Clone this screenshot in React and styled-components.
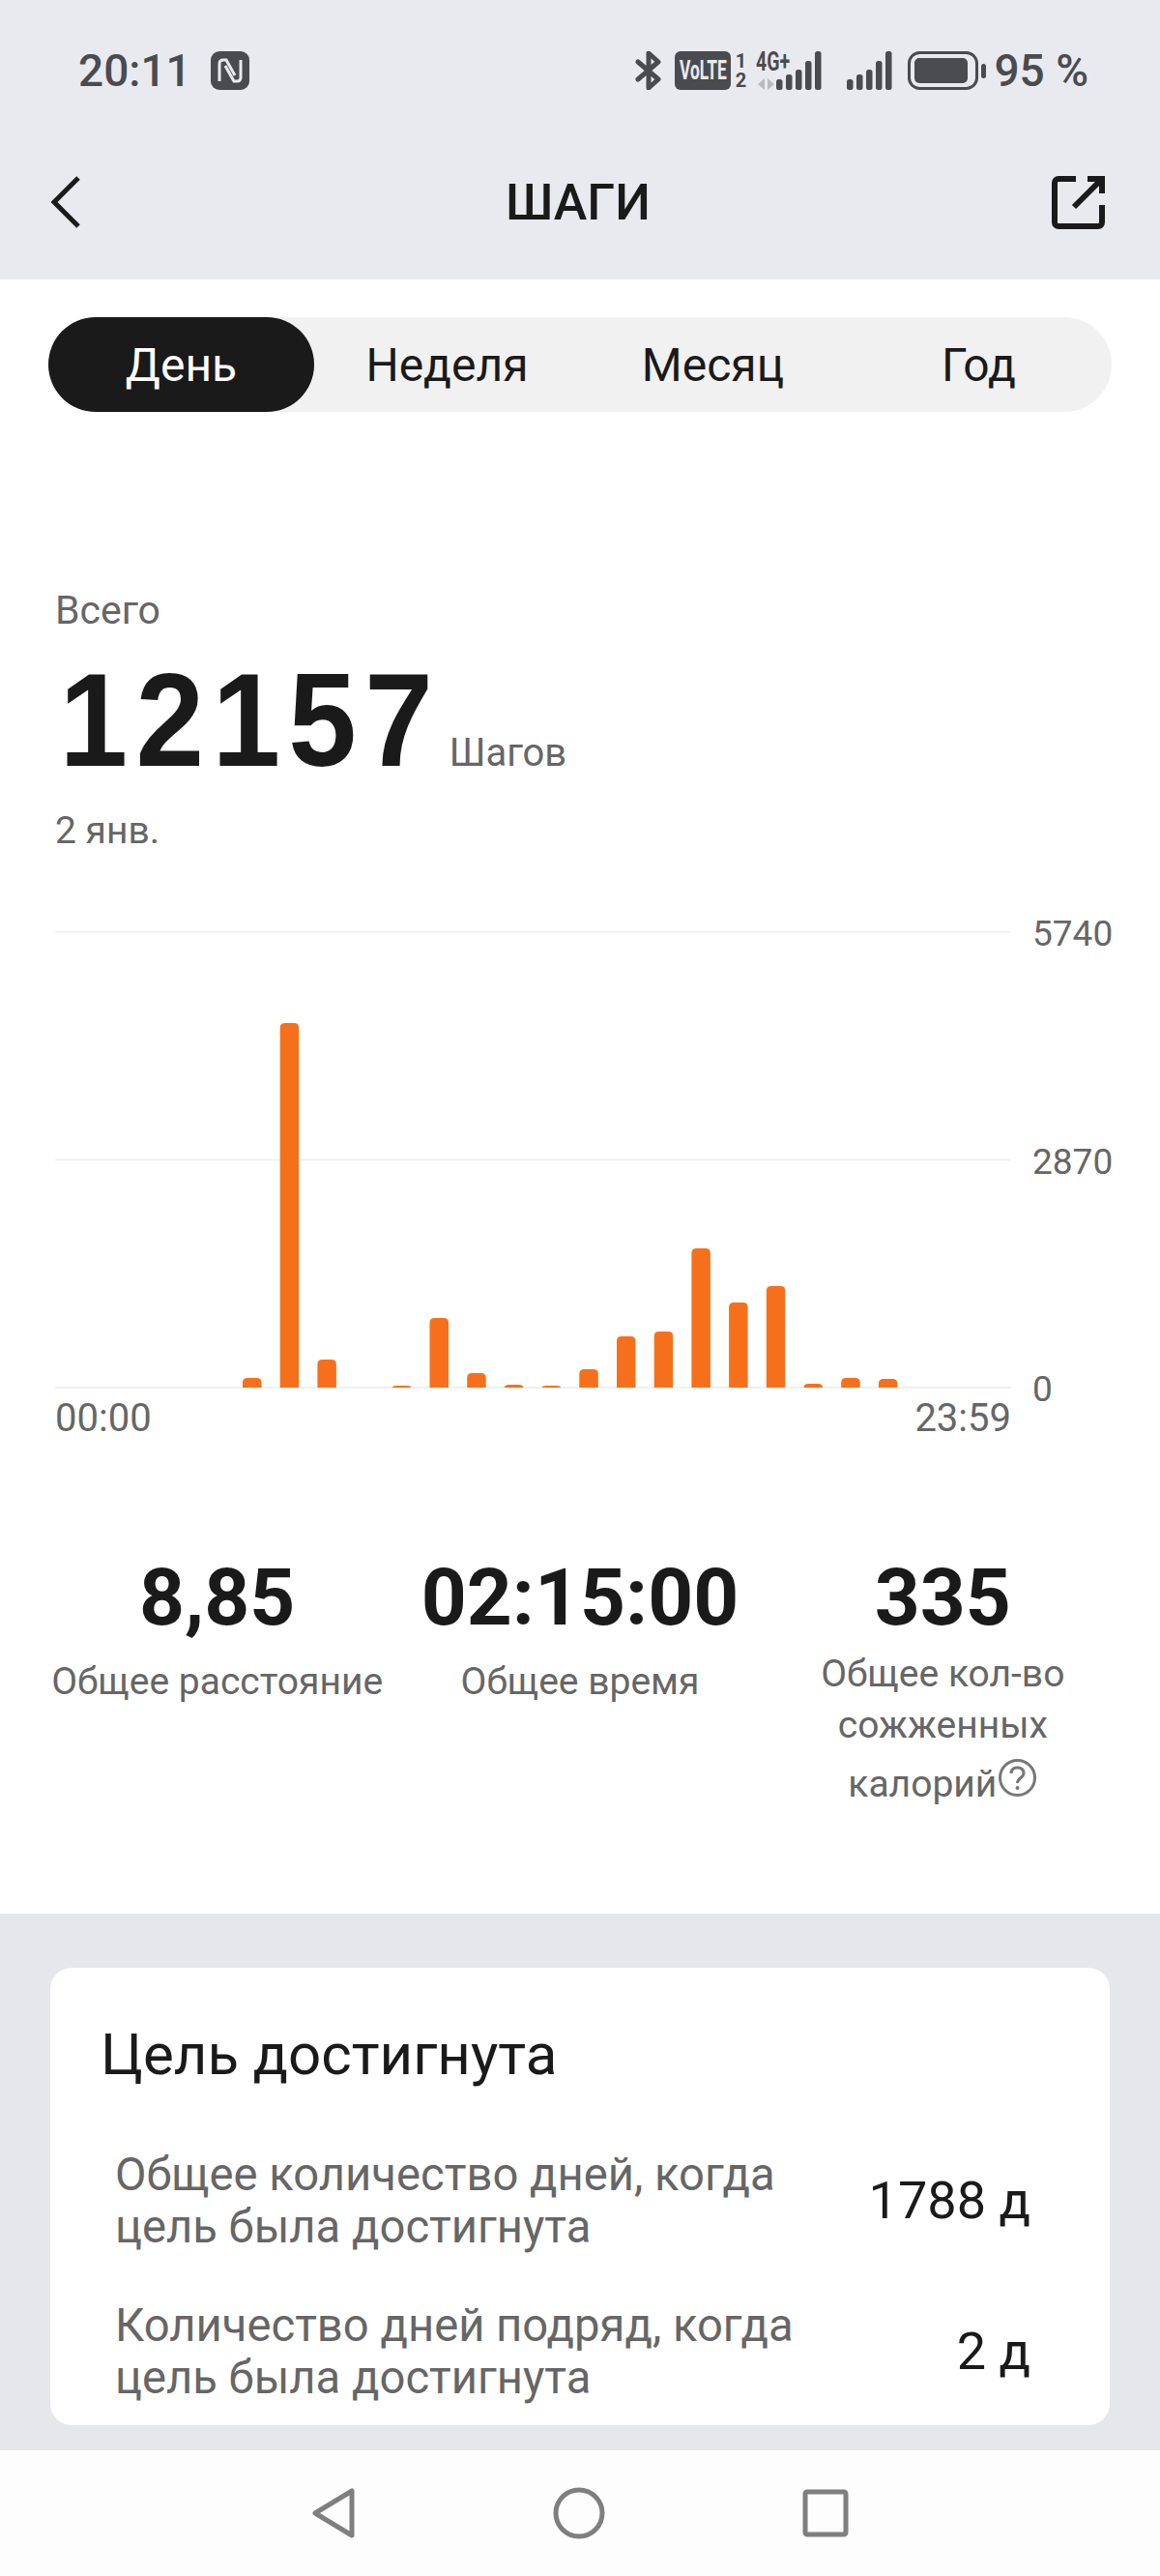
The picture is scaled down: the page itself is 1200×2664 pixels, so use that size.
import React from 'react';
import styled, { createGlobalStyle } from 'styled-components';

const GlobalStyle = createGlobalStyle`
  html, body {
    margin: 0;
    padding: 0;
    background: #fff;
  }
  * {
    box-sizing: border-box;
  }
`;

const Page = styled.div`
  width: 1200px;
  height: 2664px;
  display: flex;
  flex-direction: column;
  overflow: hidden;
  background: #fff;
  font-family: Roboto, "Noto Sans", sans-serif;
`;

const TopArea = styled.header`
  height: 289px;
  background: #e9eaef;
`;

const StatusBar = styled.div`
  height: 146px;
  padding: 0 74px 0 81px;
  display: flex;
  align-items: center;
  justify-content: space-between;
  color: #4a4b4f;
`;

const StatusGroup = styled.div`
  display: flex;
  align-items: center;
`;

const StatusText = styled.span`
  font-size: 46px;
  font-weight: 500;
  line-height: 46px;
  margin-left: ${props => props.$gap || 0}px;
`;

const VolteBox = styled.span`
  width: 58px;
  height: 40px;
  margin-left: 14px;
  border-radius: 6px;
  background: #4a4b4f;
  color: #e9eaef;
  display: flex;
  align-items: center;
  justify-content: center;
  overflow: hidden;
`;

const Squeezed = styled.span`
  display: inline-block;
  transform: scaleX(${props => props.$x});
  transform-origin: ${props => props.$origin || 'center'};
  font-size: ${props => props.$size}px;
  font-weight: 700;
  line-height: 1;
`;

const SimDigits = styled.span`
  width: 10px;
  margin-left: 5px;
  display: flex;
  flex-direction: column;
  align-items: center;
  font-size: 20px;
  font-weight: 700;
  line-height: 20px;
`;

const SignalSlot = styled.span`
  position: relative;
  width: 68px;
  height: 40px;
  margin-left: 11px;
`;

const FourG = styled.span`
  position: absolute;
  left: 0;
  top: -2px;
  white-space: nowrap;
`;

const SecondSignal = styled.span`
  display: flex;
  margin-left: 26px;
`;

const NavRow = styled.div`
  height: 126px;
  padding: 0 57px 0 53px;
  display: grid;
  grid-template-columns: 1fr auto 1fr;
  align-items: center;
`;

const NavEnd = styled.div`
  display: flex;
  justify-content: ${props => (props.$right ? 'flex-end' : 'flex-start')};
`;

const Title = styled.h1`
  margin: 0;
  font-size: 52px;
  font-weight: 500;
  color: #1a1a1a;
`;

const Tabs = styled.div`
  margin: 39px 50px 0;
  height: 98px;
  display: grid;
  grid-template-columns: repeat(4, 1fr);
  background: #f1f1f2;
  border-radius: 49px;
`;

const Tab = styled.div`
  display: flex;
  align-items: center;
  justify-content: center;
  border-radius: 49px;
  font-size: 48px;
  background: ${props => (props.$active ? '#1a1a1a' : 'transparent')};
  color: ${props => (props.$active ? '#fff' : '#1a1a1a')};
`;

const Summary = styled.section`
  padding: 182px 57px 0;
`;

const Caption = styled.div`
  font-size: ${props => props.$size}px;
  line-height: 46px;
  color: #666;
`;

const TotalRow = styled.div`
  display: flex;
  align-items: baseline;
  height: 182px;
  padding-top: 19px;
`;

const TotalValue = styled.span`
  display: inline-block;
  margin-right: -26px;
  padding-left: 5px;
  transform: scaleX(0.92);
  transform-origin: left;
  font-family: "Liberation Sans", Arial, sans-serif;
  font-size: 138px;
  font-weight: 700;
  letter-spacing: 9px;
  line-height: 142px;
  color: #1a1a1a;
`;

const TotalUnit = styled.span`
  font-size: 40px;
  color: #666;
`;

const Chart = styled.section`
  margin-top: 81px;
  padding-left: 57px;
  display: grid;
  grid-template-columns: 989px 1fr;
  column-gap: 22px;
`;

const Plot = styled.svg`
  display: block;
  width: 989px;
  height: 473px;
`;

const YAxis = styled.div`
  height: 473px;
  position: relative;
`;

const YLabel = styled.span`
  position: absolute;
  left: 0;
  top: ${props => props.$top}px;
  transform: translateY(-50%);
  font-size: 37px;
  line-height: 44px;
  color: #666;
`;

const XAxis = styled.div`
  display: flex;
  justify-content: space-between;
  margin-top: 9px;
  font-size: 40px;
  line-height: 44px;
  color: #666;
`;

const Stats = styled.section`
  margin-top: 118px;
  padding: 0 37px;
  display: grid;
  grid-template-columns: repeat(3, 1fr);
  text-align: center;
`;

const Stat = styled.div`
  display: flex;
  flex-direction: column;
  align-items: center;
`;

const StatValue = styled.div`
  font-size: 82px;
  font-weight: 700;
  line-height: 90px;
  color: #1a1a1a;
`;

const StatLabel = styled.div`
  width: 360px;
  margin-top: ${props => (props.$tall ? '8px' : '13px')};
  font-size: 39px;
  line-height: ${props => (props.$tall ? '53px' : '58px')};
  color: #666;
`;

const LastLine = styled.span`
  display: block;
  margin-top: 7px;
`;

const HelpIcon = styled.svg`
  display: inline-block;
  width: 41px;
  height: 41px;
  margin-left: 1px;
  vertical-align: -1px;
`;

const GoalArea = styled.section`
  margin-top: auto;
  height: 555px;
  padding: 56px 52px 26px 52px;
  background: #e6e7eb;
`;

const GoalCard = styled.div`
  height: 473px;
  padding: 55px 48px 0 52px;
  border-radius: 22px;
  background: #fff;
`;

const GoalTitle = styled.h2`
  margin: 0 0 62px;
  font-size: 60px;
  font-weight: 400;
  line-height: 70px;
  color: #1a1a1a;
`;

const GoalRow = styled.div`
  display: flex;
  align-items: center;
  justify-content: space-between;
  margin: 0 0 48px 15px;
  padding-right: 34px;
`;

const GoalText = styled.div`
  font-size: 47.2px;
  line-height: 54px;
  color: #666;
`;

const GoalValue = styled.div`
  font-size: 54px;
  line-height: 60px;
  color: #1a1a1a;
`;

const BottomNav = styled.nav`
  height: 130px;
  padding-left: 322px;
  display: flex;
  align-items: center;
  gap: 204px;
  background: #fdfdfd;
`;

const barHeights = [10, 377, 29, 0, 2, 72, 15, 3, 2, 19, 53, 58, 144, 88, 105, 4, 10, 9];
const signalTops = [29, 24, 19, 10, 0];

const NfcIcon = () => (
  <svg width="40" height="40" viewBox="0 0 40 40" style={{ marginLeft: 20 }}>
    <rect width="40" height="40" rx="9" fill="#4a4b4f" />
    <path d="M9 31V13q0-4 4-4h3l9 16" fill="none" stroke="#e9eaef" strokeWidth="3" />
    <path d="M31 9v18q0 4-4 4h-3l-9-16" fill="none" stroke="#e9eaef" strokeWidth="3" />
  </svg>
);

const BluetoothIcon = () => (
  <svg width="27" height="40" viewBox="0 0 27 40">
    <path d="M3 11l21 18-10 9V2l10 9L3 29" fill="none" stroke="#4a4b4f" strokeWidth="5" strokeLinejoin="round" strokeLinecap="round" />
  </svg>
);

const SignalBars = ({ width, x = 0, children }) => (
  <svg width={width} height="40" viewBox={`0 0 ${width} 40`}>
    {children}
    {signalTops.map((top, i) => (
      <rect key={i} x={x + i * 10} y={top} width="6.5" height={40 - top} rx="2.5" fill="#4a4b4f" />
    ))}
  </svg>
);

const BatteryIcon = () => (
  <svg width="81" height="40" viewBox="0 0 81 40" style={{ marginLeft: 16 }}>
    <rect x="1.5" y="1.5" width="70" height="37" rx="11" fill="none" stroke="#4a4b4f" strokeWidth="3" />
    <rect x="7" y="7" width="55" height="26" rx="5" fill="#4a4b4f" />
    <rect x="76" y="13" width="5" height="15" rx="2.5" fill="#4a4b4f" />
  </svg>
);

const App = () => (
  <Page>
    <GlobalStyle />
    <TopArea>
      <StatusBar>
        <StatusGroup>
          <StatusText>20:11</StatusText>
          <NfcIcon />
        </StatusGroup>
        <StatusGroup>
          <BluetoothIcon />
          <VolteBox>
            <Squeezed $x={0.62} $size={28}>VoLTE</Squeezed>
          </VolteBox>
          <SimDigits>
            <span>1</span>
            <span>2</span>
          </SimDigits>
          <SignalSlot>
            <FourG>
              <Squeezed $x={0.72} $size={27} $origin="left">4G+</Squeezed>
            </FourG>
            <SignalBars width={68} x={21}>
              <path d="M9 28v12l-7-6zM12 28l7 6-7 6z" fill="#b9babd" />
            </SignalBars>
          </SignalSlot>
          <SecondSignal>
            <SignalBars width={47} />
          </SecondSignal>
          <BatteryIcon />
          <StatusText $gap={8}>95 %</StatusText>
        </StatusGroup>
      </StatusBar>
      <NavRow>
        <NavEnd>
          <svg width="30" height="54" viewBox="0 0 30 54">
            <path d="M28 2L3 27l25 25" fill="none" stroke="#1a1a1a" strokeWidth="5" />
          </svg>
        </NavEnd>
        <Title>ШАГИ</Title>
        <NavEnd $right>
          <svg width="55" height="55" viewBox="0 0 55 55">
            <path d="M25 3H7a4 4 0 0 0-4 4v41a4 4 0 0 0 4 4h41a4 4 0 0 0 4-4V30" fill="none" stroke="#1a1a1a" strokeWidth="6" />
            <path d="M23 32L50 5M37 3h15v15" fill="none" stroke="#1a1a1a" strokeWidth="6" />
          </svg>
        </NavEnd>
      </NavRow>
    </TopArea>

    <Tabs>
      <Tab $active>День</Tab>
      <Tab>Неделя</Tab>
      <Tab>Месяц</Tab>
      <Tab>Год</Tab>
    </Tabs>

    <Summary>
      <Caption $size={41}>Всего</Caption>
      <TotalRow>
        <TotalValue>12157</TotalValue>
        <TotalUnit>Шагов</TotalUnit>
      </TotalRow>
      <Caption $size={39}>2 янв.</Caption>
    </Summary>

    <Chart>
      <div>
        <Plot viewBox="0 0 989 473">
          <line x1="0" x2="989" y1="0.5" y2="0.5" stroke="#f0f0f1" strokeWidth="2" />
          <line x1="0" x2="989" y1="236.5" y2="236.5" stroke="#f0f0f1" strokeWidth="2" />
          <line x1="0" x2="989" y1="472" y2="472" stroke="#f0f0f1" strokeWidth="2" />
          {barHeights.map((h, i) =>
            h > 0 ? (
              <path
                key={i}
                d={`M${194 + i * 38.7} 472v-${Math.max(h - 5, 0)}q0-${Math.min(h, 5)} 5-${Math.min(h, 5)}h9.5q5 0 5 ${Math.min(h, 5)}v${Math.max(h - 5, 0)}z`}
                fill="#f6701c"
              />
            ) : null
          )}
        </Plot>
        <XAxis>
          <span>00:00</span>
          <span>23:59</span>
        </XAxis>
      </div>
      <YAxis>
        <YLabel $top={3}>5740</YLabel>
        <YLabel $top={239}>2870</YLabel>
        <YLabel $top={474}>0</YLabel>
      </YAxis>
    </Chart>

    <Stats>
      <Stat>
        <StatValue>8,85</StatValue>
        <StatLabel>Общее расстояние</StatLabel>
      </Stat>
      <Stat>
        <StatValue>02:15:00</StatValue>
        <StatLabel>Общее время</StatLabel>
      </Stat>
      <Stat>
        <StatValue>335</StatValue>
        <StatLabel $tall>
          Общее кол-во сожженных
          <LastLine>
            калорий
            <HelpIcon viewBox="0 0 41 41">
              <circle cx="20.5" cy="20.5" r="18" fill="none" stroke="#777" strokeWidth="3" />
              <path d="M14 16q0-6 6.500-6t6.500 6c0 4.500-6.500 4.500-6.500 10" fill="none" stroke="#777" strokeWidth="3" />
              <circle cx="20.500" cy="31" r="2" fill="#777" />
            </HelpIcon>
          </LastLine>
        </StatLabel>
      </Stat>
    </Stats>

    <GoalArea>
      <GoalCard>
        <GoalTitle>Цель достигнута</GoalTitle>
        <GoalRow>
          <GoalText>
            Общее количество дней, когда
            <br />
            цель была достигнута
          </GoalText>
          <GoalValue>1788 д</GoalValue>
        </GoalRow>
        <GoalRow>
          <GoalText>
            Количество дней подряд, когда
            <br />
            цель была достигнута
          </GoalText>
          <GoalValue>2 д</GoalValue>
        </GoalRow>
      </GoalCard>
    </GoalArea>

    <BottomNav>
      <svg width="46" height="54" viewBox="0 0 46 54">
        <path d="M42 4v46L4 27z" fill="none" stroke="#7f7f7f" strokeWidth="5" strokeLinejoin="round" />
      </svg>
      <svg width="54" height="54" viewBox="0 0 54 54">
        <circle cx="27" cy="27" r="24" fill="none" stroke="#7f7f7f" strokeWidth="5" />
      </svg>
      <svg width="48" height="50" viewBox="0 0 48 50">
        <rect x="3" y="3" width="42" height="44" rx="2" fill="none" stroke="#7f7f7f" strokeWidth="5" />
      </svg>
    </BottomNav>
  </Page>
);

export default App;
